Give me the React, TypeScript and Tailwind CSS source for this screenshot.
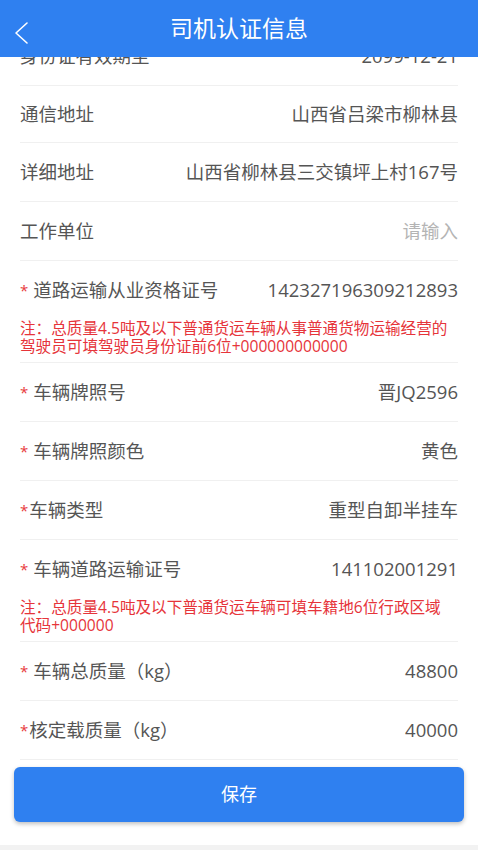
import React from "react";

type Row = {
  label: string;
  star?: "space" | "tight";
  value: string;
  placeholder?: boolean;
  note?: string[];
  h?: string;
};

const rows: Row[] = [
  { label: "身份证有效期至", value: "2099-12-21" },
  { label: "通信地址", value: "山西省吕梁市柳林县", h: "h-[56px]" },
  { label: "详细地址", value: "山西省柳林县三交镇坪上村167号" },
  { label: "工作单位", value: "请输入", placeholder: true },
  {
    label: "道路运输从业资格证号",
    star: "space",
    value: "142327196309212893",
    note: [
      "注：总质量4.5吨及以下普通货运车辆从事普通货物运输经营的",
      "驾驶员可填驾驶员身份证前6位+000000000000",
    ],
  },
  { label: "车辆牌照号", star: "space", value: "晋JQ2596" },
  { label: "车辆牌照颜色", star: "space", value: "黄色" },
  { label: "车辆类型", star: "tight", value: "重型自卸半挂车" },
  {
    label: "车辆道路运输证号",
    star: "space",
    value: "141102001291",
    note: ["注：总质量4.5吨及以下普通货运车辆可填车籍地6位行政区域", "代码+000000"],
  },
  { label: "车辆总质量（kg）", star: "space", value: "48800" },
  { label: "核定载质量（kg）", star: "tight", value: "40000" },
];

const font = { fontFamily: '"Open Sans", "Noto Sans CJK SC", sans-serif' };

export default function App() {
  return (
    <div className="relative h-[850px] w-[478px] overflow-hidden bg-[#f2f2f2]" style={font}>
      {/* header overlays scrolled content */}
      <div className="absolute left-0 right-0 top-0 z-10 flex h-[57px] items-center justify-center bg-[#2f80f0]">
        <svg className="absolute left-[12px] top-[19px]" width="20" height="28" viewBox="0 0 20 28" fill="none">
          <polyline points="15,4 4,14 15,24" stroke="#fff" strokeWidth="1.6" strokeLinecap="round" strokeLinejoin="round" />
        </svg>
        <span className="text-[23px] text-white">司机认证信息</span>
      </div>

      <div className="flex h-[845px] flex-col bg-white pt-[27px]">
        <div className="flex flex-col px-[20px]">
          {rows.map((r, i) => (
            <div key={i} className="flex flex-col border-b border-[#f0f0f0]">
              <div className={`flex items-center justify-between ${r.h ?? "h-[58px]"}`}>
                <div className="flex items-center text-[18.5px] text-[#555]">
                  {r.star && (
                    <span className={`text-[15px] text-[#e8393c] ${r.star === "space" ? "mr-[5px]" : "mr-[1px]"}`}>*</span>
                  )}
                  <span>{r.label}</span>
                </div>
                <span className={`text-[18.5px] ${r.placeholder ? "text-[#b4b4b4]" : "text-[#555]"}`}>{r.value}</span>
              </div>
              {r.note && (
                <div className="flex flex-col pb-[7px] text-[15.6px] leading-[18px] text-[#e6343a]">
                  {r.note.map((n, j) => (
                    <span key={j} className="whitespace-nowrap">{n}</span>
                  ))}
                </div>
              )}
            </div>
          ))}
        </div>
        <div className="mt-[7px] px-[14px]">
          <button className="flex h-[55px] w-full items-center justify-center rounded-[6px] bg-[#2f80f0] text-[18px] text-white shadow-[0_2px_4px_rgba(0,0,0,0.25)]">
            保存
          </button>
        </div>
      </div>
    </div>
  );
}
